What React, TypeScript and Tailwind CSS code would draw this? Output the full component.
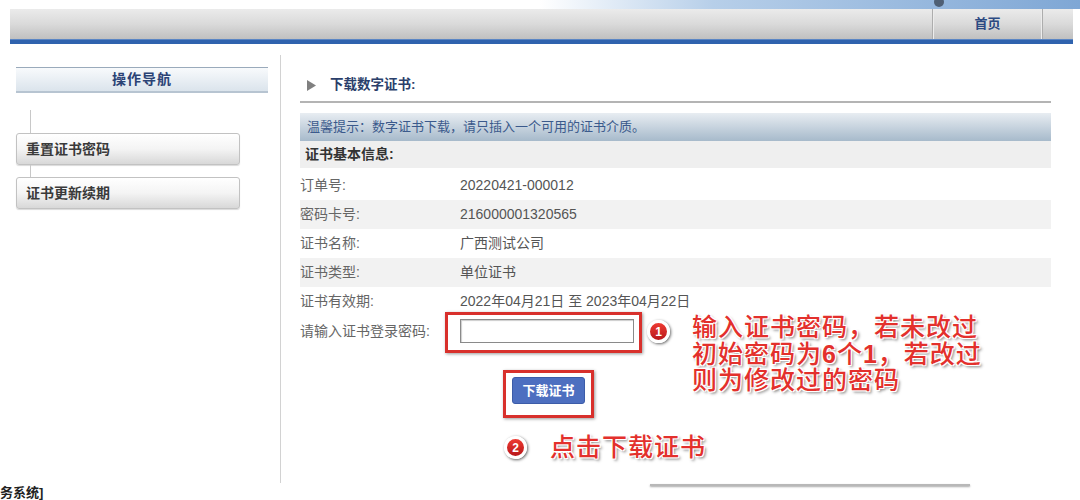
import React from "react";

const rows = [
  { label: "订单号:", value: "20220421-000012" },
  { label: "密码卡号:", value: "216000001320565" },
  { label: "证书名称:", value: "广西测试公司" },
  { label: "证书类型:", value: "单位证书" },
  { label: "证书有效期:", value: "2022年04月21日 至 2023年04月22日" },
];

const sideLinks = ["重置证书密码", "证书更新续期"];

// red outlined note text used for the screenshot annotations
const noteClass =
  "text-[25px] leading-[26.5px] tracking-[1px] font-medium text-[#e3302c] [text-shadow:-1px_-1px_0_#fff,1px_-1px_0_#fff,-1px_1px_0_#fff,1px_1px_0_#fff,0_0_2px_#fff,2px_2px_3px_rgba(0,0,0,0.55)]";

const StepBadge = ({ n }: { n: number }) => (
  <div className="w-[23px] h-[23px] rounded-full bg-gradient-to-b from-[#ee3a32] to-[#b8161a] border-[3px] border-white shadow-[1px_1px_3px_rgba(0,0,0,0.6)] flex items-center justify-center text-white text-[12px] font-bold leading-none">
    {n}
  </div>
);

const App = () => {
  return (
    <div className="relative w-[1080px] h-[500px] overflow-hidden bg-white font-['Liberation_Sans','Noto_Sans_CJK_SC',sans-serif] text-[14px] text-[#555]">
      {/* banner strip */}
      <div className="relative h-[9px] bg-gradient-to-r from-white from-[50%] via-[#b7cfe9] via-[66%] to-[#7fa7d5]">
        <svg className="absolute left-[930px] top-0" width="18" height="9" viewBox="0 0 18 9">
          <ellipse cx="9" cy="2" rx="5" ry="5" fill="#3d4a5a" opacity="0.8" />
        </svg>
      </div>

      {/* top menu bar */}
      <header className="ml-[10px] mr-[7px] h-[35px] flex flex-col">
        <div className="h-[30px] flex justify-end bg-gradient-to-b from-[#ebebeb] via-[#dadada] to-[#c0c0c0]">
          <div className="w-[111px] mr-[30px] border-l border-r border-[#adadad] shadow-[inset_1px_0_0_#ececec,inset_-1px_0_0_#ececec] flex items-center justify-center text-[13px] font-bold text-[#2c4a82]">
            首页
          </div>
        </div>
        <div className="h-[5px] bg-[#2f63ae] border-t border-[#5b86c4]" />
      </header>

      {/* body */}
      <div className="flex h-[439px]">
        {/* left navigation */}
        <aside className="ml-[16px] w-[252px] pt-[23px]">
          <div className="h-[26px] border-t border-[#9aaabb] border-b-2 border-b-[#b7c4d1] bg-gradient-to-b from-[#f8fafc] to-[#dbe4ec] flex items-center justify-center text-[14px] font-bold tracking-[1px] text-[#2a4275]">
            操作导航
          </div>
          <div className="mt-[17px] ml-[14px] h-[23px] border-l border-[#c8c8c8]" />
          {sideLinks.map((link, i) => (
            <React.Fragment key={link}>
              {i > 0 && <div className="ml-[14px] h-[12px] border-l border-[#c8c8c8]" />}
              <div className="w-[224px] h-[32px] rounded-[3px] border border-[#c2c2c2] bg-gradient-to-b from-white via-[#f4f4f4] to-[#d8d8d8] shadow-[0_1px_1px_rgba(0,0,0,0.15)] flex items-center pl-[9px] text-[14px] font-bold text-[#3a3a3a]">
                {link}
              </div>
            </React.Fragment>
          ))}
        </aside>

        {/* main panel */}
        <main className="ml-[12px] mt-[11px] h-[428px] w-[771px] border-l border-[#d2d2d2] pl-[19px]">
          <div className="pt-[20px] pb-[5px] border-b-2 border-[#b4b4b4]">
            <div className="h-[21px] flex items-center pl-[7px] gap-[14px]">
              <svg width="9" height="11" viewBox="0 0 9 11">
                <polygon points="0,0 9,5.5 0,11" fill="#808080" />
              </svg>
              <span className="text-[13.5px] font-bold text-[#2b3f6b]">下载数字证书:</span>
            </div>
          </div>

          <div className="mt-[10px] h-[28px] bg-gradient-to-b from-[#e8edf2] to-[#a7bacb] flex items-center pl-[7px] text-[13px] text-[#3b5a8c]">
            温馨提示：数字证书下载，请只插入一个可用的证书介质。
          </div>
          <div className="h-[27px] bg-[#efefef] flex items-center pl-[5px] text-[14px] font-bold text-[#333]">
            证书基本信息:
          </div>

          <div className="pt-[3px]">
            {rows.map((row, i) => (
              <div
                key={row.label}
                className={`h-[29px] flex items-center ${i % 2 === 1 ? "bg-[#f2f2f2]" : "bg-white"}`}>
                <span className="w-[160px] text-[#666]">{row.label}</span>
                <span>{row.value}</span>
              </div>
            ))}
            <div className="h-[30px] flex items-center">
              <span className="w-[160px] text-[#666]">请输入证书登录密码:</span>
              <input
                type="password"
                className="w-[174px] h-[24px] border border-[#8a8a8a] shadow-[inset_1px_1px_1px_rgba(0,0,0,0.2)] bg-white outline-none px-1"
              />
            </div>
          </div>

          <button className="mt-[31px] ml-[212px] w-[73px] h-[27px] rounded-[3px] bg-[#4d6fc0] border border-[#3c5ca8] text-white text-[13px] font-bold flex items-center justify-center">
            下载证书
          </button>
        </main>
      </div>

      {/* footer fragment */}
      <div className="flex items-start h-[17px]">
        <span className="w-[650px] pt-[3px] text-[13px] font-bold text-[#222] leading-[13px]">
          务系统]
        </span>
        <div className="mt-[1px] w-[320px] h-[2px] bg-[#b8b8b8] shadow-[0_1px_2px_rgba(0,0,0,0.35)]" />
      </div>

      {/* annotation overlays */}
      <div className="absolute left-[445px] top-[312px] w-[197px] h-[41px] border-[3px] border-[#d8302c] shadow-[1px_1px_3px_rgba(0,0,0,0.4)]" />
      <div className="absolute left-[503px] top-[370px] w-[91px] h-[48px] border-[3px] border-[#d8302c] shadow-[1px_1px_3px_rgba(0,0,0,0.4)]" />

      <div className="absolute left-[647px] top-[320px]">
        <StepBadge n={1} />
      </div>
      <div className={`absolute left-[692px] top-[314px] ${noteClass}`}>
        <div>输入证书密码，若未改过</div>
        <div>
          初始密码为<b className="font-bold">6</b>个<b className="font-bold">1</b>，若改过
        </div>
        <div>则为修改过的密码</div>
      </div>

      <div className="absolute left-[504px] top-[436px]">
        <StepBadge n={2} />
      </div>
      <div className={`absolute left-[550px] top-[434px] ${noteClass}`}>点击下载证书</div>
    </div>
  );
};

export default App;
